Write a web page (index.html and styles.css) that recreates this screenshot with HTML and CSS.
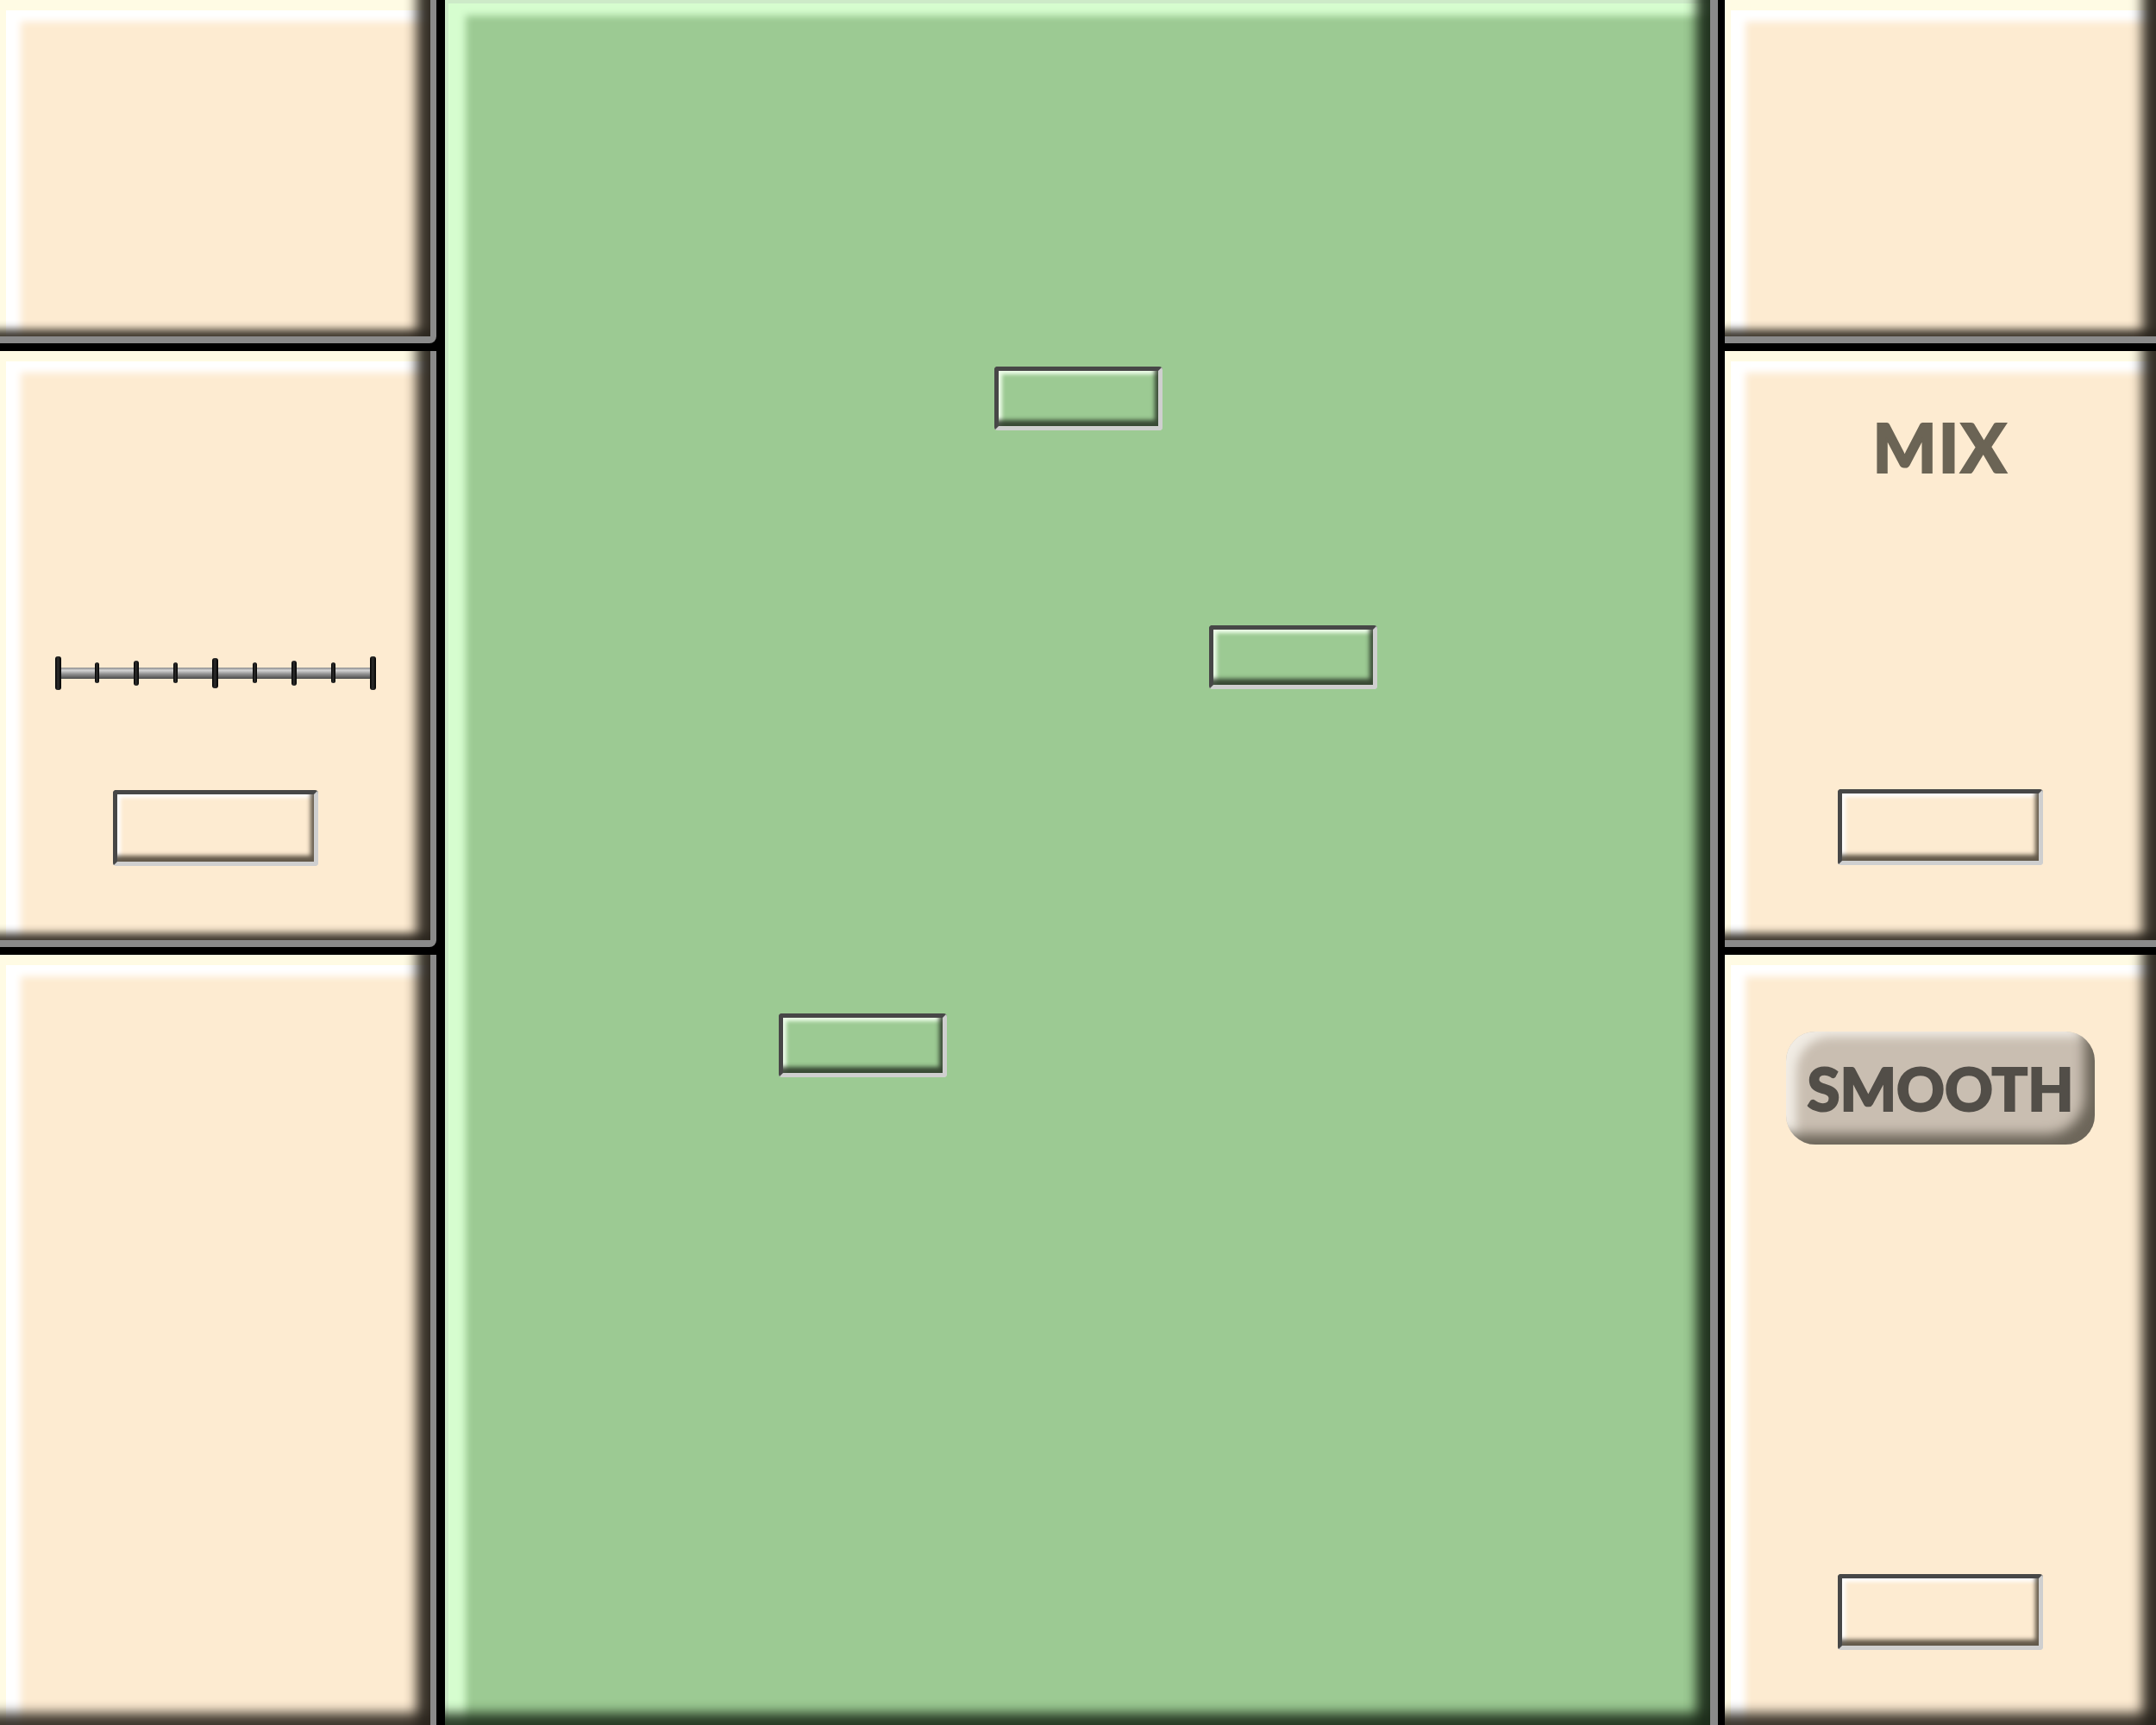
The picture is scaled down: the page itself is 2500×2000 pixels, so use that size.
FILE: index.html
```html
<!DOCTYPE html>
<html lang="en">
<head>
<meta charset="utf-8">
<title>Mixer</title>
<link rel="stylesheet" href="styles.css">
</head>
<body>
<div class="app">
  <div class="side side-left">
    <section class="panel cream p-top"></section>
    <section class="panel cream p-mid">
      <div class="slider">
        <span class="tick t-end"></span>
        <span class="tick t-minor"></span>
        <span class="tick t-quarter"></span>
        <span class="tick t-minor"></span>
        <span class="tick t-center"></span>
        <span class="tick t-minor"></span>
        <span class="tick t-quarter"></span>
        <span class="tick t-minor"></span>
        <span class="tick t-end"></span>
      </div>
      <div class="field field-lg field-after-slider"></div>
    </section>
    <section class="panel cream p-bot"></section>
  </div>

  <main class="stage">
    <div class="field field-sm f1"></div>
    <div class="field field-sm f2"></div>
    <div class="field field-sm f3"></div>
  </main>

  <div class="side side-right">
    <section class="panel cream p-top"></section>
    <section class="panel cream p-mid">
      <div class="label">MIX</div>
      <div class="field field-lg field-after-label"></div>
    </section>
    <section class="panel cream p-bot">
      <button class="btn" type="button">SMOOTH</button>
      <div class="field field-lg field-after-btn"></div>
    </section>
  </div>
</div>
</body>
</html>
```

FILE: styles.css
```css
* {
  box-sizing: border-box;
  margin: 0;
  padding: 0;
}

html,
body {
  width: 2500px;
  height: 2000px;
  overflow: hidden;
  background: #000;
}

.app {
  display: grid;
  grid-template-columns: 506px 1494px 508px;
  height: 2000px;
  overflow: hidden;
}

.side {
  display: flex;
  flex-direction: column;
  gap: 9px;
  height: 2000px;
}

.panel {
  flex: none;
  display: flex;
  flex-direction: column;
  align-items: center;
}

.cream {
  background: #fdebd1;
  border-right: 7px solid #8a8a8a;
  border-bottom: 8px solid #8a8a8a;
  border-bottom-right-radius: 8px;
  box-shadow:
    inset -36px 0 14px -20px rgba(42, 37, 29, 0.95),
    inset 0 -28px 10px -20px rgba(42, 37, 29, 0.9),
    inset 7px 12px 0 0 #fffbe4,
    inset 26px 27px 8px -2px #ffffff;
}

.side-right .cream {
  border-right-width: 8px;
}

.p-top {
  height: 398px;
}

.p-mid {
  height: 691px;
}

.p-bot {
  height: 901px;
  box-shadow:
    inset -36px 0 14px -20px rgba(42, 37, 29, 0.95),
    inset 0 -34px 14px -20px rgba(42, 37, 29, 0.9),
    inset 7px 12px 0 0 #fffbe4,
    inset 26px 27px 8px -2px #ffffff;
}

/* central green stage */
.stage {
  position: relative;
  margin: 0 8px 0 10px;
  height: 2009px;
  background: #9cca93;
  border-right: 9px solid #8a8a8a;
  border-bottom: 9px solid #8a8a8a;
  box-shadow:
    inset -36px 0 14px -20px rgba(28, 44, 26, 0.95),
    inset 0 -34px 14px -20px rgba(28, 44, 26, 0.9),
    inset 4px 4px 0 0 #cdeac8,
    inset 26px 20px 8px -2px #d6fdcf;
}

/* text fields */
.field {
  border: 5px solid;
  border-color: #474747 #cfcfcf #cfcfcf #474747;
  border-radius: 4px;
  box-shadow:
    inset -6px -9px 5px -2px rgba(72, 64, 50, 0.85),
    inset 5px 5px 4px -1px rgba(255, 255, 255, 0.95);
}

.field-lg {
  width: 238px;
  height: 88px;
}

.field-sm {
  position: absolute;
  width: 195px;
  height: 74px;
  box-shadow:
    inset -6px -9px 5px -2px rgba(40, 52, 36, 0.85),
    inset 5px 5px 4px -1px rgba(240, 255, 236, 0.95);
}

.f1 {
  left: 637px;
  top: 425px;
}

.f2 {
  left: 886px;
  top: 725px;
}

.f3 {
  left: 387px;
  top: 1175px;
}

/* slider */
.slider {
  margin-top: 353px;
  width: 372px;
  height: 40px;
  display: flex;
  justify-content: space-between;
  align-items: center;
  background: linear-gradient(#8a8a8a, #d4d4d4 25%, #959595 55%, #5e5e5e 88%, #484848) center / calc(100% - 8px) 13px no-repeat;
}

.tick {
  display: block;
  background: linear-gradient(90deg, #000, #2e2e2e 45%, #000);
  border-radius: 3px;
}

.t-end {
  width: 7px;
  height: 39px;
}

.t-center {
  width: 7px;
  height: 35px;
}

.t-quarter {
  width: 6px;
  height: 29px;
}

.t-minor {
  width: 5px;
  height: 24px;
}

.field-after-slider {
  margin-top: 116px;
}

/* right column */
.label {
  margin-top: 72px;
  height: 78px;
  font-family: Lato, "DejaVu Sans", sans-serif;
  font-weight: 900;
  font-size: 78px;
  line-height: 78px;
  color: #6b6455;
  -webkit-text-stroke: 2px #6b6455;
  letter-spacing: 2px;
}

.field-after-label {
  margin-top: 358px;
}

.btn {
  margin-top: 89px;
  width: 358px;
  height: 131px;
  border: none;
  border-radius: 34px;
  background: #c9beb1;
  box-shadow:
    inset -22px -22px 14px -10px #6d665a,
    inset 18px 12px 12px -6px #f1ece4;
  font-family: Lato, "DejaVu Sans", sans-serif;
  font-weight: 900;
  font-size: 69px;
  line-height: 1;
  color: #524e48;
  -webkit-text-stroke: 2px #524e48;
  letter-spacing: 0;
  display: flex;
  align-items: center;
  justify-content: center;
}

.field-after-btn {
  margin-top: 498px;
}
```
